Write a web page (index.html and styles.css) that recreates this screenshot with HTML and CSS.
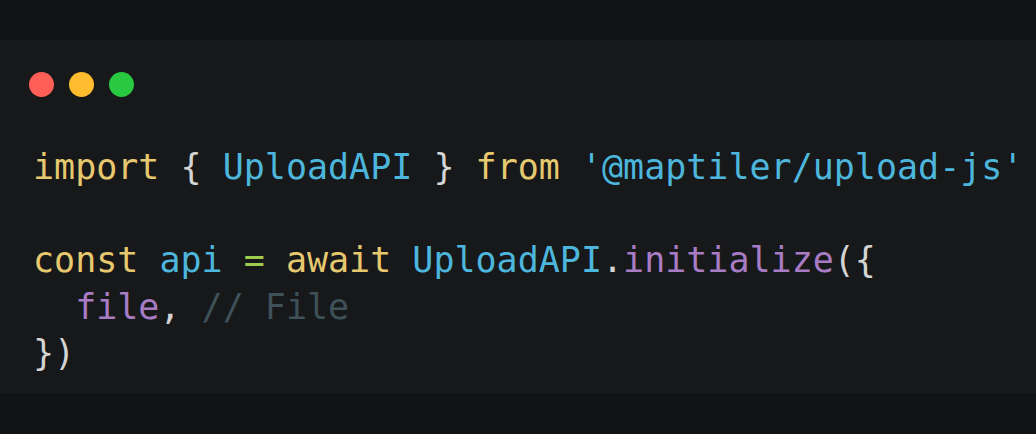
FILE: index.html
```html
<!DOCTYPE html>
<html>
<head>
<meta charset="utf-8">
<link rel="stylesheet" href="styles.css">
</head>
<body>
<div class="page">
  <div class="card">
    <div class="dots">
      <span class="dot red"></span>
      <span class="dot yellow"></span>
      <span class="dot green"></span>
    </div>
<pre class="code"><span class="kw">import</span> <span class="pn">{</span> <span class="id">UploadAPI</span> <span class="pn">}</span> <span class="kw">from</span> <span class="id">'@maptiler/upload-js'</span>

<span class="kw">const</span> <span class="id">api</span> <span class="op">=</span> <span class="kw">await</span> <span class="id">UploadAPI</span><span class="pn">.</span><span class="fn">initialize</span><span class="pn">({</span>
  <span class="fn">file</span><span class="pn">,</span> <span class="cm">// File</span>
<span class="pn">})</span></pre>
  </div>
</div>
</body>
</html>
```

FILE: styles.css
```css
html, body {
  margin: 0;
  padding: 0;
  background: #121314;
}
.page {
  width: 1036px;
  height: 434px;
  padding-top: 40px;
  box-sizing: border-box;
  background: #121314;
}
.card {
  background: #17181a;
  height: 353px;
  box-sizing: border-box;
  padding: 32px 0 0 29px;
}
.dots {
  display: flex;
  gap: 15px;
}
.dot {
  width: 25px;
  height: 25px;
  border-radius: 50%;
  display: block;
}
.red { background: #ff5f57; }
.yellow { background: #febc2e; }
.green { background: #28c840; }
.code {
  margin: 47px 0 0 4px;
  font-family: "DejaVu Sans Mono", monospace;
  font-size: 35px;
  line-height: 46.5px;
  color: #d4d4d4;
  white-space: pre;
}
.kw { color: #e6c86e; }
.id { color: #4db6dc; }
.fn { color: #a87cc4; }
.pn { color: #d4d4d4; }
.op { color: #9fcb4e; }
.cm { color: #3e5058; }
```
